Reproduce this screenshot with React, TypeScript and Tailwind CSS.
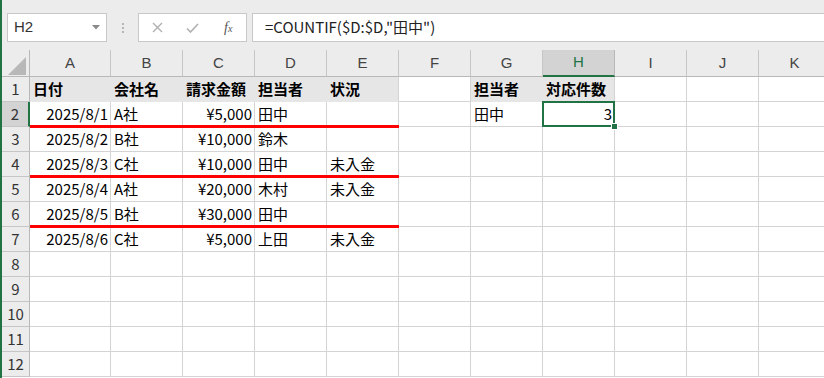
import React from 'react'

const COLS = ['A', 'B', 'C', 'D', 'E', 'F', 'G', 'H', 'I', 'J', 'K']
const font = { fontFamily: '"Noto Sans CJK JP", "Noto Sans", sans-serif' }

type Cell = { v?: string; right?: boolean; fill?: boolean; bold?: boolean }

const data: Cell[][] = [
  [
    { v: '日付', fill: true, bold: true },
    { v: '会社名', fill: true, bold: true },
    { v: '請求金額', fill: true, bold: true },
    { v: '担当者', fill: true, bold: true },
    { v: '状況', fill: true, bold: true },
    {},
    { v: '担当者', fill: true, bold: true },
    { v: '対応件数', fill: true, bold: true },
  ],
  [{ v: '2025/8/1', right: true }, { v: 'A社' }, { v: '¥5,000', right: true }, { v: '田中' }, {}, {}, { v: '田中' }, { v: '3', right: true }],
  [{ v: '2025/8/2', right: true }, { v: 'B社' }, { v: '¥10,000', right: true }, { v: '鈴木' }, {}],
  [{ v: '2025/8/3', right: true }, { v: 'C社' }, { v: '¥10,000', right: true }, { v: '田中' }, { v: '未入金' }],
  [{ v: '2025/8/4', right: true }, { v: 'A社' }, { v: '¥20,000', right: true }, { v: '木村' }, { v: '未入金' }],
  [{ v: '2025/8/5', right: true }, { v: 'B社' }, { v: '¥30,000', right: true }, { v: '田中' }, {}],
  [{ v: '2025/8/6', right: true }, { v: 'C社' }, { v: '¥5,000', right: true }, { v: '上田' }, { v: '未入金' }],
  [], [], [], [], [],
]

// rows whose A:E cells get the red underline (1-based)
const redRows = [2, 4, 6]

function Toolbar() {
  return (
    <div className="h-[50px] bg-[#ececec] flex items-start pt-[13px]">
      {/* name box */}
      <div className="ml-[5px] w-[100px] h-[29px] bg-white border border-[#c8c8c8] flex items-center justify-between pl-[6px] pr-[6px]">
        <span className="text-[15px] text-[#333]" style={{ fontFamily: '"Liberation Sans", Arial, sans-serif' }}>H2</span>
        <svg width="8" height="5" viewBox="0 0 8 5"><polygon points="0,0 8,0 4,4.5" fill="#8a8a8a" /></svg>
      </div>
      <div className="w-[31px] h-[29px] flex flex-col items-center justify-center gap-[2px]">
        <span className="w-[2px] h-[2px] bg-[#b5b5b5]" />
        <span className="w-[2px] h-[2px] bg-[#b5b5b5]" />
        <span className="w-[2px] h-[2px] bg-[#b5b5b5]" />
      </div>
      {/* cancel / enter / fx */}
      <div className="w-[109px] h-[29px] bg-white border border-[#c8c8c8] flex items-center">
        <div className="w-[36px] flex justify-center pl-[2px]">
          <svg width="11" height="11" viewBox="0 0 11 11"><path d="M1 1L10 10M10 1L1 10" stroke="#b0b0b0" strokeWidth="1.4" /></svg>
        </div>
        <div className="w-[36px] flex justify-center">
          <svg width="13" height="10" viewBox="0 0 13 10"><path d="M1 5.5L4.5 9L12 1" stroke="#b0b0b0" strokeWidth="1.6" fill="none" /></svg>
        </div>
        <div className="w-[36px] flex justify-center">
          <span className="italic text-[14px] text-[#555] leading-none" style={{ fontFamily: '"Liberation Serif", "Times New Roman", serif' }}>
            f<span className="text-[10px]">x</span>
          </span>
        </div>
      </div>
      <div className="ml-[5px] flex-1 h-[29px] bg-white border border-[#c8c8c8] border-r-0 flex items-center pl-[12px]">
        <span className="text-[15px] text-[#222]" style={font}>=COUNTIF($D:$D,"田中")</span>
      </div>
    </div>
  )
}

export default function App() {
  return (
    <div className="w-[824px] h-[378px] overflow-hidden bg-white flex" style={font}>
      <div className="w-[2px] shrink-0 bg-[#217346]" />
      <div className="flex-1 flex flex-col min-w-0">
        <Toolbar />
        <div className="grid grid-cols-[28px_81px_repeat(10,72px)] w-[829px]">
          {/* header row */}
          <div className="h-[27px] bg-[#ececec] border-r border-b border-[#b8b8b8] relative">
            <svg className="absolute left-0 top-0" width="28" height="27" viewBox="0 0 28 27">
              <polygon points="24,7 24,25 6,25" fill="#b8b8b8" />
            </svg>
          </div>
          {COLS.map((c) => {
            const sel = c === 'H'
            return (
              <div
                key={c}
                className={
                  sel
                    ? 'h-[27px] bg-[#d3d3d3] border-r border-[#b8b8b8] border-b-2 border-b-[#217346] flex items-center justify-center text-[15px] text-[#217346]'
                    : 'h-[27px] bg-[#ececec] border-r border-b border-[#c6c6c6] border-b-[#b8b8b8] flex items-center justify-center text-[15px] text-[#444]'
                }
                style={{ fontFamily: '"Liberation Sans", Arial, sans-serif' }}
              >
                {c}
              </div>
            )
          })}

          {data.map((row, ri) => {
            const rn = ri + 1
            return (
              <React.Fragment key={rn}>
                <div
                  className={
                    rn === 2
                      ? 'h-[25px] bg-[#d3d3d3] border-b border-[#c6c6c6] border-r-2 border-r-[#217346] flex items-center justify-center text-[15px] text-[#333]'
                      : 'h-[25px] bg-[#ececec] border-b border-[#c6c6c6] border-r border-r-[#b8b8b8] flex items-center justify-center text-[15px] text-[#333]'
                  }
                >
                  {rn}
                </div>
                {COLS.map((c, ci) => {
                  const cell = row[ci] || {}
                  const nextFill = row[ci + 1]?.fill
                  const active = rn === 2 && c === 'H'
                  let cls = 'h-[25px] relative flex items-center text-[15px] text-black whitespace-nowrap '
                  cls += cell.right ? 'justify-end pr-[2px] ' : 'pl-[3px] '
                  if (cell.fill) {
                    cls += 'bg-[#e7e6e6] border-b border-b-[#e7e6e6] border-r '
                    cls += nextFill ? 'border-r-[#e7e6e6] ' : 'border-r-[#d4d4d4] '
                  } else {
                    cls += 'border-r border-b border-[#d4d4d4] '
                  }
                  if (cell.bold) cls += 'font-bold '
                  if (active) cls += 'z-10 '
                  return (
                    <div key={c} className={cls}>
                      {cell.v}
                      {redRows.includes(rn) && ci < 5 && (
                        <span className="absolute left-0 -right-[1px] -bottom-[2px] h-[3px] bg-[#ff0000] z-10" />
                      )}
                      {active && (
                        <>
                          <span className="absolute -left-[1px] -top-[1px] -right-[1px] -bottom-[1px] border-2 border-[#217346]" />
                          <span className="absolute -right-[4px] -bottom-[4px] w-[7px] h-[7px] bg-[#217346] border border-white" />
                        </>
                      )}
                    </div>
                  )
                })}
              </React.Fragment>
            )
          })}
        </div>
      </div>
    </div>
  )
}
